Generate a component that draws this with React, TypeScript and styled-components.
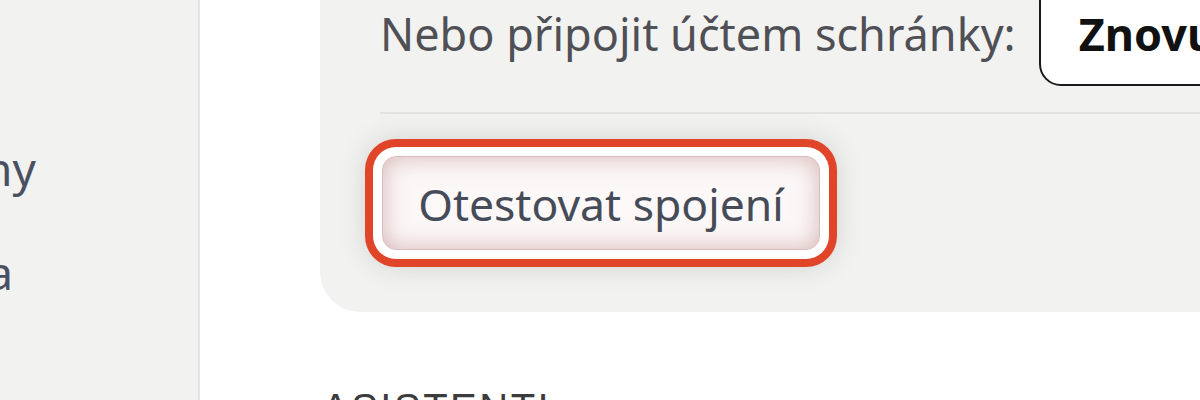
import styled, { createGlobalStyle } from 'styled-components'

const GlobalStyle = createGlobalStyle`
  html, body {
    margin: 0;
    padding: 0;
    background: #ffffff;
    overflow: hidden;
  }
  #root {
    height: 400px;
  }
`

const Page = styled.div`
  display: grid;
  grid-template-columns: 200px 1fr;
  height: 400px;
  overflow: hidden;
  font-family: 'Noto Sans', 'Open Sans', 'Liberation Sans', sans-serif;
`

const Sidebar = styled.nav`
  background-color: #f2f2f0;
  border-right: 2px solid #e4e4e2;
  display: flex;
  flex-direction: column;
  gap: 48px;
  padding-top: 140px;
`

const NavItem = styled.div<{ $end: number }>`
  width: ${(p) => p.$end}px;
  display: flex;
  justify-content: flex-end;
  white-space: nowrap;
  font-size: 46px;
  line-height: 56px;
  color: #4a5062;
`

const Main = styled.main`
  background-color: #ffffff;
  padding-left: 120px;
  overflow: hidden;
`

const Card = styled.section`
  width: 1000px;
  margin-top: -60px;
  padding: 40px 60px 62px;
  background-color: #f2f2f0;
  border-radius: 40px;
  box-sizing: border-box;
`

const ConnectRow = styled.div`
  display: flex;
  align-items: center;
  gap: 23px;
  padding-bottom: 26px;
  border-bottom: 2px solid #e3e3e1;
`

const RowLabel = styled.span`
  font-size: 45px;
  color: #4f4f56;
  white-space: nowrap;
`

const OutlineButton = styled.button`
  flex: none;
  height: 106px;
  padding: 0 38px;
  background: #ffffff;
  border: 2px solid #1a1a1a;
  border-radius: 22px;
  font-family: inherit;
  font-size: 45px;
  font-weight: 700;
  color: #111111;
  white-space: nowrap;
`

const TestButton = styled.button`
  margin: 42px 0 0 2px;
  width: 438px;
  height: 94px;
  border: 1px solid #d9bdbd;
  border-radius: 14px;
  background: #fcf8f8;
  box-shadow:
    inset 0 0 24px rgba(190, 135, 135, 0.6),
    0 0 0 9px #ffffff,
    0 0 0 17px #e04529,
    0 0 28px 17px rgba(0, 0, 0, 0.13);
  font-family: inherit;
  font-size: 44.5px;
  color: #464b58;
  cursor: pointer;
`

const SectionTitle = styled.h2`
  margin: 74px 0 0;
  padding-left: 2px;
  font-family: 'Liberation Sans', Arial, sans-serif;
  font-size: 40px;
  font-weight: 400;
  letter-spacing: 2.5px;
  color: #3c3c3c;
`

export default function App() {
  return (
    <>
      <GlobalStyle />
      <Page>
        <Sidebar>
          <NavItem $end={36}>Šablony</NavItem>
          <NavItem $end={13}>Statistika</NavItem>
        </Sidebar>
        <Main>
          <Card>
            <ConnectRow>
              <RowLabel>Nebo připojit účtem schránky:</RowLabel>
              <OutlineButton>Znovu připojit</OutlineButton>
            </ConnectRow>
            <TestButton>Otestovat spojení</TestButton>
          </Card>
          <SectionTitle>ASISTENTI</SectionTitle>
        </Main>
      </Page>
    </>
  )
}
